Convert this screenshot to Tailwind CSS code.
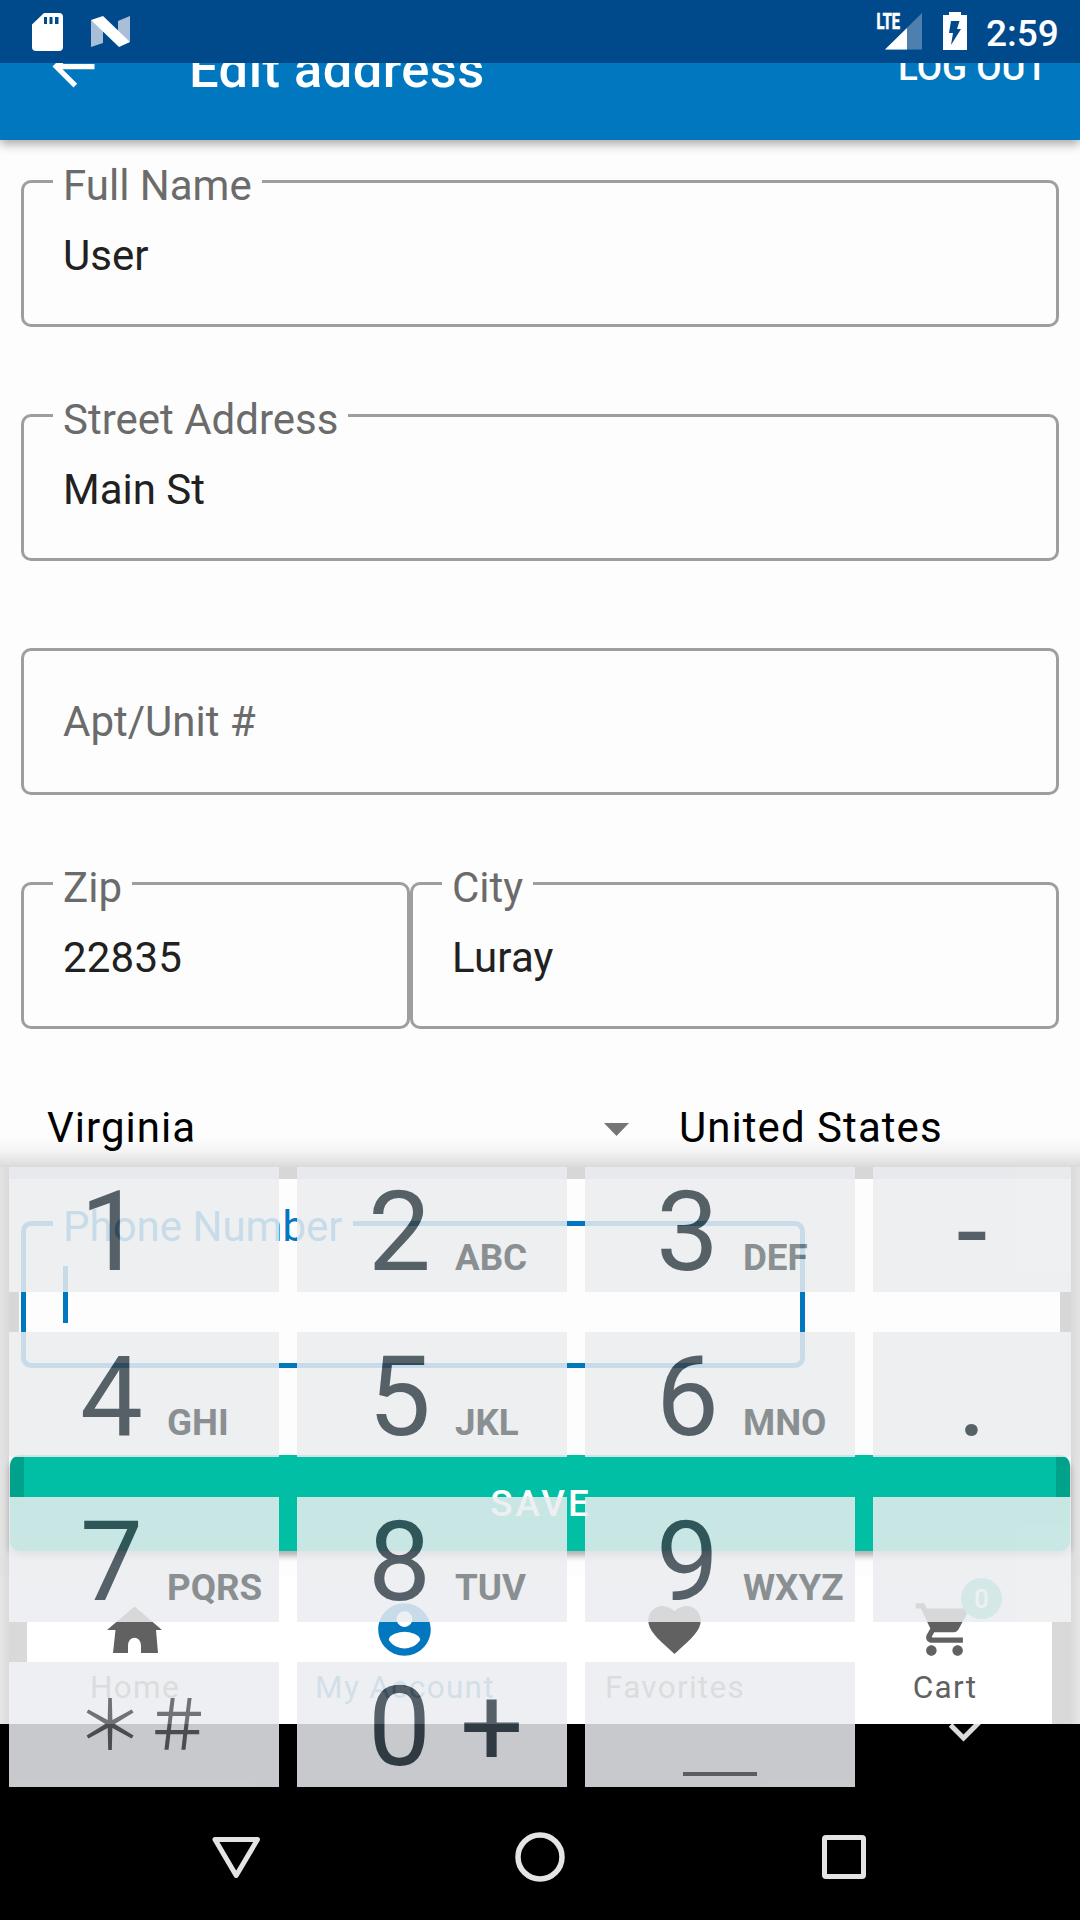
<!DOCTYPE html>
<html lang="en">
<head>
<meta charset="utf-8">
<title>Edit address</title>
<script src="https://cdn.jsdelivr.net/npm/@tailwindcss/browser@4"></script>
</head>
<body class="bg-black">
<div class="relative flex h-[1920px] w-[1080px] flex-col overflow-hidden bg-black font-['Roboto',sans-serif] whitespace-nowrap">

  <!-- App window -->
  <div class="relative flex h-[1724px] flex-col overflow-hidden bg-[#fdfdfd]">

    <!-- Toolbar, partly scrolled under the status bar -->
    <header class="z-10 -mt-[7px] flex h-[147px] shrink-0 items-center bg-[#0077bf] pr-[32px] pl-[42px] text-white shadow-[0_4px_10px_rgba(0,0,0,0.35)]">
      <svg class="size-[63px]" viewBox="0 0 24 24" fill="currentColor"><path d="M20 11H7.83l5.59-5.59L12 4l-8 8 8 8 1.41-1.41L7.83 13H20v-2z"/></svg>
      <h1 class="ml-[84px] pt-[5px] text-[52.5px] leading-[60px] font-medium tracking-[0.45px]">Edit address</h1>
      <span class="ml-auto pt-[2px] text-[36.75px] leading-[42px] font-medium">LOG OUT</span>
    </header>

    <!-- Form -->
    <main class="flex flex-col px-[21px] pt-[40px]">
      <div class="relative mb-[87px] h-[147px] rounded-[10px] border-[3px] border-[#9e9e9e] pt-[52px] pl-[39px] text-[42px] leading-[42px] text-[#212121]">User
        <span class="absolute -top-[18px] left-[29px] bg-[#fdfdfd] px-[10px] text-[#6b6b6b]">Full Name</span></div>
      <div class="relative mb-[87px] h-[147px] rounded-[10px] border-[3px] border-[#9e9e9e] pt-[52px] pl-[39px] text-[42px] leading-[42px] text-[#212121]">Main St
        <span class="absolute -top-[18px] left-[29px] bg-[#fdfdfd] px-[10px] text-[#6b6b6b]">Street Address</span></div>
      <div class="mb-[87px] flex h-[147px] items-center rounded-[10px] border-[3px] border-[#9e9e9e] pl-[39px] text-[42px] leading-[42px] text-[#6b6b6b]">Apt/Unit #</div>
      <div class="mb-[72px] flex">
        <div class="relative h-[147px] w-[389px] rounded-[10px] border-[3px] border-[#9e9e9e] pt-[52px] pl-[39px] text-[42px] leading-[42px] tracking-[0.2px] text-[#212121]">22835
          <span class="absolute -top-[18px] left-[29px] bg-[#fdfdfd] px-[10px] tracking-normal text-[#6b6b6b]">Zip</span></div>
        <div class="relative h-[147px] flex-1 rounded-[10px] border-[3px] border-[#9e9e9e] pt-[52px] pl-[39px] text-[42px] leading-[42px] tracking-[0.2px] text-[#212121]">Luray
          <span class="absolute -top-[18px] left-[29px] bg-[#fdfdfd] px-[10px] tracking-normal text-[#6b6b6b]">City</span></div>
      </div>
      <div class="mb-[67px] flex h-[53px] items-center text-[42px] leading-[53px] tracking-[1.05px] text-black">
        <span class="w-[583px] pl-[26px]">Virginia</span>
        <svg class="mt-[4px] h-[13px] w-[25px]" viewBox="0 0 25 13" fill="#757575"><path d="M0 0h25L12.500 13z"/></svg>
        <span class="ml-[50px]">United States</span>
      </div>
      <div class="relative h-[147px] w-[784px] rounded-[10px] border-[5px] border-[#0077bf] pt-[40px] pl-[37px]">
        <div class="h-[57px] w-[5px] bg-[#0077bf]"></div>
        <span class="absolute -top-[20px] left-[27px] bg-[#fdfdfd] px-[10px] text-[42px] leading-[42px] text-[#0077bf]">Phone Number</span>
      </div>
    </main>

    <!-- Primary action -->
    <button class="mx-[10px] mt-[87px] h-[96px] shrink-0 rounded-[10px] bg-[#00bfa5] pt-[2px] pl-[2px] text-[36.75px] leading-[94px] font-medium tracking-[3px] text-white shadow-[0_5px_6px_rgba(0,0,0,0.3)]">SAVE</button>

    <!-- Tabs -->
    <nav class="mt-auto grid h-[147px] shrink-0 grid-cols-4 bg-white text-center text-[31.5px] leading-[36px] tracking-[1.3px] text-[#616161]">
      <div class="flex flex-col items-center pt-[21px]">
        <svg class="-ml-[2px] size-[63px]" viewBox="0 0 63 63" fill="currentColor"><path d="M31.500 8.500L59 32H53L55 55H38V48C38 37 25 37 25 48V55H10L12.500 32H4z"/></svg>
        <span class="mt-[9px] text-[#7d7d7d]">Home</span>
      </div>
      <div class="flex flex-col items-center pt-[21px] text-[#0077bf]">
        <svg class="-ml-[2px] size-[63px]" viewBox="0 0 24 24" fill="currentColor"><path d="M12 2C6.480 2 2 6.480 2 12s4.480 10 10 10 10-4.480 10-10S17.520 2 12 2zm0 3c1.660 0 3 1.340 3 3s-1.340 3-3 3-3-1.340-3-3 1.340-3 3-3zm0 14.200c-2.500 0-4.710-1.280-6-3.220.03-1.990 4-3.080 6-3.080 1.990 0 5.970 1.090 6 3.080-1.290 1.940-3.500 3.220-6 3.220z"/></svg>
        <span class="mt-[9px] text-[#3f8fc4]">My Account</span>
      </div>
      <div class="flex flex-col items-center pt-[21px]">
        <svg class="-ml-[2px] size-[63px]" viewBox="0 0 24 24" fill="currentColor"><path d="M12 21.350l-1.450-1.320C5.400 15.360 2 12.280 2 8.500 2 5.420 4.420 3 7.500 3c1.740 0 3.410.81 4.500 2.090C13.090 3.810 14.760 3 16.500 3 19.580 3 22 5.420 22 8.500c0 3.780-3.400 6.860-8.550 11.540L12 21.350z"/></svg>
        <span class="mt-[9px] text-[#7d7d7d]">Favorites</span>
      </div>
      <div class="relative flex flex-col items-center pt-[21px]">
        <svg class="-ml-[2px] size-[63px]" viewBox="0 0 24 24" fill="currentColor"><path d="M7 18c-1.100 0-1.990.9-1.990 2S5.900 22 7 22s2-.9 2-2-.9-2-2-2zM1 2v2h2l3.600 7.590-1.350 2.450c-.16.280-.25.610-.25.960 0 1.100.9 2 2 2h12v-2H7.420c-.14 0-.25-.11-.25-.25l.03-.12.900-1.630h7.450c.75 0 1.410-.41 1.750-1.030l3.580-6.490c.08-.14.120-.31.120-.48 0-.55-.45-1-1-1H5.210l-.94-2H1zm16 16c-1.100 0-1.990.9-1.990 2s.89 2 1.990 2 2-.9 2-2-.9-2-2-2z"/></svg>
        <span class="mt-[9px]">Cart</span>
        <span class="absolute top-[1px] left-[151px] size-[41px] rounded-full bg-[#55cdb8] text-[26px] leading-[42px] font-medium tracking-normal text-white">0</span>
      </div>
    </nav>

    <!-- Shadow cast by the keyboard panel -->
    <div class="absolute top-[1137px] left-0 h-[30px] w-full bg-linear-to-b from-black/0 via-black/4 to-black/14"></div>
    <div class="absolute top-[1167px] left-[9px] h-[12px] w-[1062px] bg-black/15"></div>
    <div class="absolute top-[1167px] left-0 h-[557px] w-[9px] bg-linear-to-r from-black/10 to-black/14"></div>
    <div class="absolute top-[1167px] right-0 h-[557px] w-[9px] bg-linear-to-l from-black/10 to-black/14"></div>
    <div class="absolute top-[1292px] left-[9px] h-[40px] w-[10px] bg-black/15"></div>
    <div class="absolute top-[1292px] right-[9px] h-[40px] w-[11px] bg-black/15"></div>
    <div class="absolute top-[1456px] left-[10px] h-[41px] w-[14px] rounded-tl-[10px] bg-black/15"></div>
    <div class="absolute top-[1456px] right-[10px] h-[41px] w-[14px] rounded-tr-[10px] bg-black/15"></div>
    <div class="absolute top-[1622px] left-[9px] h-[40px] w-[18px] bg-black/15"></div>
    <div class="absolute top-[1622px] right-[9px] h-[102px] w-[19px] bg-black/15"></div>
  </div>

  <!-- Keyboard's own bottom strip -->
  <div class="flex h-[66px] pl-[949px]">
    <svg class="h-[18px] w-[32px]" viewBox="0 0 32 18" fill="none" stroke="#dcdcdc" stroke-width="5"><path d="M1.500 1L14.500 14L30 -1.500"/></svg>
  </div>

  <!-- System navigation -->
  <div class="grid h-[130px] grid-cols-[472px_136px_472px] items-center justify-items-center">
    <svg class="mt-[4px] ml-[211px] h-[43px] w-[50px] justify-self-start" viewBox="0 0 50 43" fill="none" stroke="#e4e4e4" stroke-width="5" stroke-linejoin="round"><path d="M4 3.500H46.500L25.200 39.500z"/></svg>
    <svg class="mt-[4px] size-[50px]" viewBox="0 0 50 50" fill="none" stroke="#e4e4e4" stroke-width="5.500"><circle cx="25" cy="25" r="22"/></svg>
    <div class="mt-[4px] ml-[214px] h-[44px] w-[44px] justify-self-start rounded-[4px] border-[5px] border-[#e4e4e4]"></div>
  </div>

  <!-- Status bar -->
  <div class="absolute inset-x-0 top-0 z-20 flex h-[63px] bg-[#004a8c] pl-[32px] text-white">
    <svg class="mt-[12px] h-[40px] w-[31px]" viewBox="0 0 31 40"><path fill="#fff" d="M12 1H27Q31 1 31 5V35Q31 39 27 39H4Q0 39 0 35V12.500z"/><path fill="#004a8c" d="M12 5h3v7h-3zM17.500 5h3v7h-3zM23 5h3.500v7H23z"/></svg>
    <svg class="mt-[16px] ml-[28px] h-[31px] w-[39px]" viewBox="0 0 39 31"><path fill="#a9bfd8" d="M0 4L12 12V27L0 31zM39 0V26L27 19V5z"/><path fill="#fff" d="M0 4L12 0L39 26L28 31z"/></svg>
    <svg class="mt-[12px] ml-[746px] h-[40px] w-[46px] overflow-visible" viewBox="0 0 46 40"><path fill="#4e80af" d="M46 1V37.500H9z"/><path fill="#fff" d="M31 16V37.500H9z"/><path fill="#004a8c" d="M0 0H25V20H0z"/><text x="0.500" y="17.200" fill="#fff" stroke="#fff" stroke-width="0.700" font-family="Roboto" font-weight="700" font-size="22" textLength="23.500" lengthAdjust="spacingAndGlyphs">LTE</text></svg>
    <svg class="mt-[12px] ml-[21px] h-[38px] w-[24px]" viewBox="0 0 24 38"><path fill="#fff" d="M6 0H18V3H24V38H0V3H6z"/><path fill="#004a8c" d="M8 9H16.500L14 17H18L8 33L10 21H6z"/></svg>
    <span class="ml-[19px] pt-[2px] text-[37px] leading-[63px] font-medium">2:59</span>
  </div>

  <!-- Number pad -->
  <div class="absolute top-[1167px] left-[9px] z-30 grid grid-cols-[270px_270px_270px_198px] gap-x-[18px] gap-y-[40px] text-[112px] leading-[125px] text-[#38454e] opacity-85">
    <div class="flex h-[125px] items-baseline bg-[#ebedf0] pt-[2px] pl-[71px]">1</div>
    <div class="flex h-[125px] items-baseline gap-[24px] bg-[#ebedf0] pt-[2px] pl-[71px]">2<span class="text-[36.75px] leading-none font-bold text-[#767c80]">ABC</span></div>
    <div class="flex h-[125px] items-baseline gap-[24px] bg-[#ebedf0] pt-[2px] pl-[71px]">3<span class="text-[36.75px] leading-none font-bold text-[#767c80]">DEF</span></div>
    <div class="h-[125px] bg-[#ebedf0] pt-[2px] text-center">-</div>

    <div class="flex h-[125px] items-baseline gap-[24px] bg-[#ebedf0] pt-[2px] pl-[71px]">4<span class="text-[36.75px] leading-none font-bold text-[#767c80]">GHI</span></div>
    <div class="flex h-[125px] items-baseline gap-[24px] bg-[#ebedf0] pt-[2px] pl-[71px]">5<span class="text-[36.75px] leading-none font-bold text-[#767c80]">JKL</span></div>
    <div class="flex h-[125px] items-baseline gap-[24px] bg-[#ebedf0] pt-[2px] pl-[71px]">6<span class="text-[36.75px] leading-none font-bold text-[#767c80]">MNO</span></div>
    <div class="h-[125px] bg-[#ebedf0] pt-[2px] text-center">.</div>

    <div class="flex h-[125px] items-baseline gap-[24px] bg-[#ebedf0] pt-[2px] pl-[71px]">7<span class="text-[36.75px] leading-none font-bold text-[#767c80]">PQRS</span></div>
    <div class="flex h-[125px] items-baseline gap-[24px] bg-[#ebedf0] pt-[2px] pl-[71px]">8<span class="text-[36.75px] leading-none font-bold text-[#767c80]">TUV</span></div>
    <div class="flex h-[125px] items-baseline gap-[24px] bg-[#ebedf0] pt-[2px] pl-[71px]">9<span class="text-[36.75px] leading-none font-bold text-[#767c80]">WXYZ</span></div>
    <div class="h-[125px] bg-[#ebedf0]"></div>

    <div class="h-[125px] bg-[#ebedf0] pl-[67px] font-['Noto_Sans_CJK_JP',sans-serif] text-[68px] leading-[117px] text-[#575b5e]">＊＃</div>
    <div class="flex h-[125px] items-baseline gap-[29px] bg-[#ebedf0] pt-[2px] pl-[71px]">0<span>+</span></div>
    <div class="flex h-[125px] items-end justify-center bg-[#ebedf0] pb-[11px]"><div class="h-[4px] w-[74px] bg-[#6c6f71]"></div></div>
  </div>
</div>
</body>
</html>
